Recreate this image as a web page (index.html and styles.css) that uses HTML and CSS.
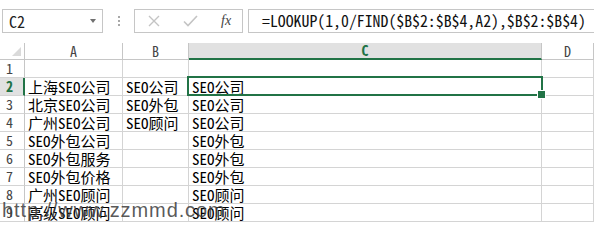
FILE: index.html
```html
<!DOCTYPE html>
<html lang="zh-CN">
<head>
<meta charset="utf-8">
<title>Excel LOOKUP</title>
<link rel="stylesheet" href="styles.css">
</head>
<body>
<div class="toolbar">
  <div class="namebox"><span class="name">C2</span><span class="caret"></span></div>
  <div class="grip"><i></i><i></i><i></i></div>
  <div class="fbtns">
    <svg class="ic-x" width="12" height="12" viewBox="0 0 12 12"><path d="M1 1 L11 11 M11 1 L1 11" stroke="#c4c4c4" stroke-width="1.4" fill="none"/></svg>
    <svg class="ic-ok" width="15" height="12" viewBox="0 0 15 12"><path d="M1 6.5 L5 10.5 L14 1" stroke="#c4c4c4" stroke-width="1.6" fill="none"/></svg>
    <span class="fx">fx</span>
  </div>
  <div class="formula">=LOOKUP(1,0/FIND($B$2:$B$4,A2),$B$2:$B$4)</div>
</div>
<div class="sheet">
  <div class="cell hd corner"><span class="tri"></span></div>
  <div class="cell hd">A</div>
  <div class="cell hd">B</div>
  <div class="cell hd sel">C</div>
  <div class="cell hd">D</div>

  <div class="cell rh">1</div><div class="cell"></div><div class="cell"></div><div class="cell"></div><div class="cell"></div>
  <div class="cell rh sel">2</div><div class="cell">上海SEO公司</div><div class="cell">SEO公司</div><div class="cell active">SEO公司</div><div class="cell"></div>
  <div class="cell rh">3</div><div class="cell">北京SEO公司</div><div class="cell">SEO外包</div><div class="cell">SEO公司</div><div class="cell"></div>
  <div class="cell rh">4</div><div class="cell">广州SEO公司</div><div class="cell">SEO顾问</div><div class="cell">SEO公司</div><div class="cell"></div>
  <div class="cell rh">5</div><div class="cell">SEO外包公司</div><div class="cell"></div><div class="cell">SEO外包</div><div class="cell"></div>
  <div class="cell rh">6</div><div class="cell">SEO外包服务</div><div class="cell"></div><div class="cell">SEO外包</div><div class="cell"></div>
  <div class="cell rh">7</div><div class="cell">SEO外包价格</div><div class="cell"></div><div class="cell">SEO外包</div><div class="cell"></div>
  <div class="cell rh">8</div><div class="cell">广州SEO顾问</div><div class="cell"></div><div class="cell">SEO顾问</div><div class="cell"></div>
  <div class="cell rh">9</div><div class="cell">高级SEO顾问</div><div class="cell"></div><div class="cell">SEO顾问</div><div class="cell"></div>
</div>
<div class="watermark">http://www.zzmmd.com</div>
</body>
</html>
```
FILE: styles.css
```css
* { box-sizing: border-box; margin: 0; padding: 0; }
body {
  margin: 0;
  width: 594px;
  height: 225px;
  overflow: hidden;
  background: #fff;
  position: relative;
  font-family: "Noto Sans Mono CJK SC", "Noto Sans CJK SC", monospace;
  color: #000;
}
.toolbar { display: flex; height: 24px; margin-top: 9px; }
.namebox {
  margin-left: 2px; width: 101px; border: 1px solid #c6c6c6;
  display: flex; align-items: center; justify-content: space-between;
  padding: 0 6px 0 6px; font-size: 16px; line-height: 20px; color: #222;
}
.caret {
  width: 0; height: 0;
  border-left: 3.5px solid transparent; border-right: 3.5px solid transparent;
  border-top: 4px solid #707070;
}
.grip { width: 31px; display: flex; flex-direction: column; align-items: center; justify-content: center; gap: 2px; }
.grip i { width: 2px; height: 2px; background: #a8a8a8; display: block; }
.fbtns { width: 109px; border: 1px solid #c6c6c6; display: flex; align-items: center; }
.ic-x { margin-left: 13px; }
.ic-ok { margin-left: 23px; }
.fx { margin-left: 23px; font-family: "Liberation Serif", serif; font-style: italic; font-size: 14px; line-height: 18px; color: #444; }
.formula {
  margin-left: 5px; flex: 1; border: 1px solid #c6c6c6; border-right: none;
  padding-left: 13px; font-size: 15.8px; line-height: 22px; white-space: nowrap; color: #111;
}
.sheet {
  margin-top: 10px;
  display: grid;
  grid-template-columns: 25px 98px 66px 353px 52px;
  grid-template-rows: 17px repeat(9, 18px);
}
.cell {
  border-right: 1px solid #d4d4d4; border-bottom: 1px solid #d4d4d4;
  font-size: 15px; line-height: 17px; padding-left: 3px;
  white-space: nowrap;
}
.hd { border-color: #c6c6c6; text-align: center; font-size: 14px; line-height: 16px; color: #444; padding-left: 0; }
.hd.sel { background: #e1e1e1; color: #217346; font-weight: bold; border-bottom: 2px solid #217346; line-height: 15px; }
.corner { position: relative; }
.tri {
  position: absolute; right: 3px; bottom: 3px; width: 0; height: 0;
  border-left: 9px solid transparent; border-bottom: 9px solid #dadada;
}
.rh { border-right-color: #c6c6c6; font-size: 14px; color: #444; padding-left: 6px; }
.rh.sel { background: #e1e1e1; color: #217346; font-weight: bold; border-right: 2px solid #217346; }
.active { position: relative; }
.active::before {
  content: ""; position: absolute; left: -2px; top: -2px; right: -2px; bottom: -1px;
  border: 2px solid #217346;
}
.active::after {
  content: ""; position: absolute; right: -5px; bottom: -4px; width: 7px; height: 7px;
  background: #217346; border: 1px solid #fff;
}
.watermark {
  position: absolute; left: 2px; top: 200px;
  font-family: "Liberation Sans", Arial, sans-serif; font-size: 20px; line-height: 20px;
  letter-spacing: 0.9px; color: rgba(60, 60, 60, 0.85);
}
```
